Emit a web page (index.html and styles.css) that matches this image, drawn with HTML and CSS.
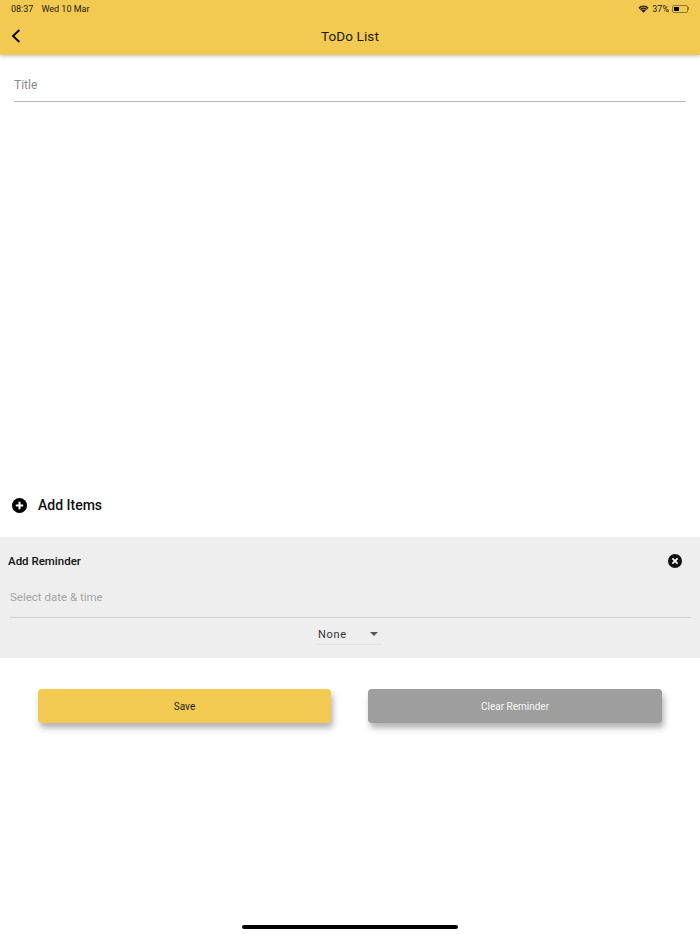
FILE: index.html
```html
<!DOCTYPE html>
<html>

<head>
    <meta charset="UTF-8">
    <title>ToDo List</title>
    <link rel="stylesheet" href="styles.css">
</head>

<body>
    <div class="page">
        <!-- header + status bar -->
        <div class="header">
            <div class="status">
                <div class="status_left">
                    <span>08:37</span>
                    <span>Wed 10 Mar</span>
                </div>
                <div class="status_right">
                    <svg class="wifi" width="11" height="8" viewBox="0 0 12 9">
                        <path d="M6 8.6 L0.3 3 C3.5 -0.3 8.5 -0.3 11.7 3 Z" fill="#1c1a10" />
                        <path d="M1.9 4.1 C4.3 1.9 7.7 1.9 10.1 4.1" fill="none" stroke="#f2ca52" stroke-width="0.9" />
                        <path d="M3.3 5.8 C4.9 4.4 7.1 4.4 8.7 5.8" fill="none" stroke="#f2ca52" stroke-width="0.9" />
                    </svg>
                    <span>37%</span>
                    <div class="battery">
                        <div class="battery_fill"></div>
                    </div>
                    <div class="battery_tip"></div>
                </div>
            </div>
            <div class="nav">
                <svg class="back" width="10" height="14" viewBox="0 0 10 14">
                    <path d="M8.4 1 L2 7 L8.4 13" fill="none" stroke="#000" stroke-width="1.8" />
                </svg>
                <div class="nav_title">ToDo List</div>
            </div>
        </div>

        <div class="title_field">Title</div>

        <div class="add_items">
            <svg width="15" height="15" viewBox="0 0 15 15">
                <circle cx="7.5" cy="7.5" r="7.5" fill="#000" />
                <path d="M7.5 3.8 V11.2 M3.8 7.5 H11.2" stroke="#fff" stroke-width="2" />
            </svg>
            <span>Add Items</span>
        </div>

        <div class="reminder">
            <div class="reminder_top">
                <span>Add Reminder</span>
                <svg width="14" height="14" viewBox="0 0 14 14">
                    <circle cx="7" cy="7" r="7" fill="#111" />
                    <path d="M4.4 4.4 L9.6 9.6 M9.6 4.4 L4.4 9.6" stroke="#fff" stroke-width="1.8" />
                </svg>
            </div>
            <div class="date_field">Select date &amp; time</div>
            <div class="select_row">
                <div class="select">
                    <span>None</span>
                    <div class="arrow"></div>
                </div>
            </div>
        </div>

        <div class="buttons">
            <div class="btn btn_save">Save</div>
            <div class="btn btn_clear">Clear Reminder</div>
        </div>

        <div class="home_row">
            <div class="home_bar"></div>
        </div>
    </div>
</body>

</html>
```

FILE: styles.css
```css
* {
    padding: 0;
    margin: 0;
    box-sizing: border-box;
}

body {
    background: #fff;
    font-family: Roboto, "Noto Sans", sans-serif;
    color: #1a1a1a;
}

.page {
    width: 700px;
    height: 934px;
    display: flex;
    flex-direction: column;
    overflow: hidden;
}

.header {
    height: 55px;
    background: #f2ca52;
    box-shadow: 0 1px 4px rgba(0, 0, 0, 0.25);
    padding: 3px 11px 0 11px;
}

.status {
    display: flex;
    justify-content: space-between;
    align-items: center;
    height: 11px;
    font-size: 9px;
    color: #1c1a10;
}

.status_left {
    display: flex;
    gap: 8px;
}

.status_right {
    display: flex;
    align-items: center;
}

.status_right span {
    margin-left: 3px;
    margin-right: 3px;
}

.battery {
    width: 16px;
    height: 8px;
    border: 1px solid #8f7a34;
    border-radius: 2px;
    padding: 1px;
}

.battery_fill {
    width: 5px;
    height: 4px;
    background: #000;
}

.battery_tip {
    width: 1px;
    height: 3px;
    background: #8f7a34;
}

.nav {
    display: flex;
    align-items: center;
    justify-content: center;
    position: relative;
    height: 36px;
    margin-top: 4px;
}

.back {
    position: absolute;
    left: 0;
    top: 11px;
}

.nav_title {
    font-size: 13.5px;
    letter-spacing: 0.1px;
    color: #1a1a1a;
}

.title_field {
    margin: 20px 14px 0 14px;
    height: 27px;
    font-size: 12px;
    line-height: 21px;
    color: #8a8a8a;
    border-bottom: 1px solid #b5b5b5;
}

.add_items {
    display: flex;
    align-items: center;
    gap: 11px;
    margin-top: 393px;
    margin-left: 12px;
    height: 20px;
    font-size: 14px;
    font-weight: 500;
    color: #111;
}

.reminder {
    margin-top: 22px;
    height: 121px;
    background: #eee;
    padding: 0 0 0 8px;
}

.reminder_top {
    display: flex;
    justify-content: space-between;
    align-items: center;
    height: 48px;
    padding-right: 18px;
    font-size: 11.5px;
    font-weight: 500;
    color: #111;
}

.date_field {
    margin: 0 9px 0 2px;
    height: 33px;
    font-size: 11.5px;
    line-height: 25px;
    color: #a5a5a5;
    border-bottom: 1px solid #cfcfcf;
}

.select_row {
    display: flex;
    justify-content: center;
    padding-right: 9px;
}

.select {
    display: flex;
    align-items: center;
    justify-content: space-between;
    width: 65px;
    height: 27px;
    padding: 6px 4px 0 1px;
    font-size: 11px;
    letter-spacing: 0.7px;
    color: #333;
    border-bottom: 1px solid #e2e2e2;
}

.arrow {
    width: 0;
    height: 0;
    border-left: 4px solid transparent;
    border-right: 4px solid transparent;
    border-top: 4px solid #555;
}

.buttons {
    display: flex;
    gap: 37px;
    margin-top: 31px;
    padding: 0 38px;
}

.btn {
    height: 34px;
    border-radius: 4px;
    text-align: center;
    font-size: 10px;
    line-height: 35px;
    box-shadow: 2px 5px 6px rgba(0, 0, 0, 0.3);
}

.btn_save {
    width: 293px;
    background: #f2ca52;
    color: #222;
}

.btn_clear {
    width: 294px;
    background: #9e9e9e;
    color: #f8f8f8;
}

.home_row {
    display: flex;
    justify-content: center;
    margin-top: 202px;
}

.home_bar {
    width: 216px;
    height: 4px;
    border-radius: 2px;
    background: #000;
}
```
